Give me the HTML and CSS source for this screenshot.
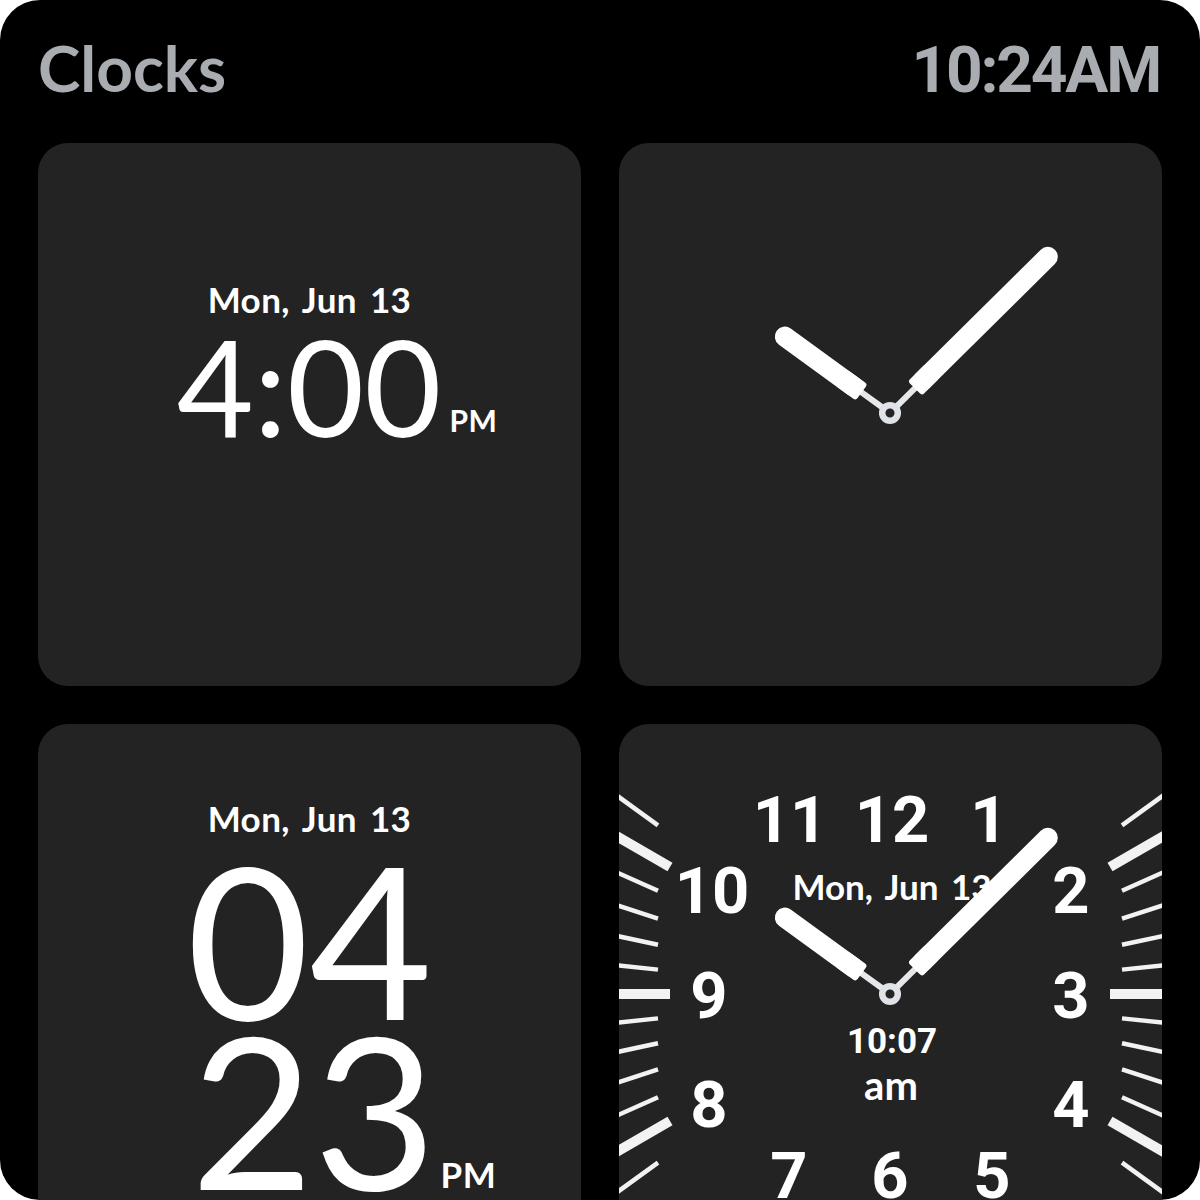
FILE: index.html
```html
<!DOCTYPE html>
<html lang="en">
<head>
<meta charset="utf-8">
<title>Clocks</title>
<link rel="stylesheet" href="styles.css">
</head>
<body>
<div class="screen">
  <header class="topbar">
    <h1 class="title">Clocks</h1>
    <div class="now">10:24AM</div>
  </header>
  <main class="grid">
    <section class="card digital-a">
      <div class="date">Mon, Jun 13</div>
      <div class="time-a">4:00<span class="ampm">PM</span></div>
    </section>

    <section class="card">
      <svg class="face" viewBox="0 0 543 543" width="543" height="543">
        <g transform="translate(271 270)">
          <g transform="rotate(-54)">
            <rect class="hand-link" x="-3" y="-42" width="6" height="34"/>
            <rect class="hand" x="-10" y="-140" width="20" height="105" rx="10"/>
            <rect class="hand" x="-10" y="-60" width="20" height="25" rx="3"/>
          </g>
          <g transform="rotate(45.3)">
            <rect class="hand-link" x="-3" y="-42" width="6" height="34"/>
            <rect class="hand" x="-10" y="-232" width="20" height="197" rx="10"/>
            <rect class="hand" x="-10" y="-60" width="20" height="25" rx="3"/>
          </g>
          <circle class="pivot" cx="0" cy="0" r="7.8"/>
        </g>
      </svg>
    </section>

    <section class="card digital-b">
      <div class="date">Mon, Jun 13</div>
      <div class="time-b time-b-first">04</div>
      <div class="time-b">23<span class="ampm ampm-b">PM</span></div>
    </section>

    <section class="card">
      <svg class="face" viewBox="0 0 543 543" width="543" height="543">
        <g class="ticks">
          <line class="tick" x1="39" y1="245.62" x2="-29" y2="238.47"/>
          <line class="tick" x1="39" y1="294.38" x2="-29" y2="301.53"/>
          <line class="tick" x1="39" y1="220.69" x2="-29" y2="206.23"/>
          <line class="tick" x1="39" y1="319.31" x2="-29" y2="333.77"/>
          <line class="tick" x1="39" y1="194.62" x2="-29" y2="172.52"/>
          <line class="tick" x1="39" y1="345.38" x2="-29" y2="367.48"/>
          <line class="tick" x1="39" y1="166.71" x2="-29" y2="136.43"/>
          <line class="tick" x1="39" y1="373.29" x2="-29" y2="403.57"/>
          <line class="tick-major" x1="51" y1="142.98" x2="-29" y2="96.79"/>
          <line class="tick-major" x1="51" y1="397.02" x2="-29" y2="443.21"/>
          <line class="tick" x1="39" y1="101.44" x2="-29" y2="52.04"/>
          <line class="tick" x1="39" y1="438.56" x2="-29" y2="487.96"/>
          <line class="tick-major" x1="51" y1="270" x2="-29" y2="270"/>

          <line class="tick" x1="503" y1="245.62" x2="571" y2="238.47"/>
          <line class="tick" x1="503" y1="294.38" x2="571" y2="301.53"/>
          <line class="tick" x1="503" y1="220.69" x2="571" y2="206.23"/>
          <line class="tick" x1="503" y1="319.31" x2="571" y2="333.77"/>
          <line class="tick" x1="503" y1="194.62" x2="571" y2="172.52"/>
          <line class="tick" x1="503" y1="345.38" x2="571" y2="367.48"/>
          <line class="tick" x1="503" y1="166.71" x2="571" y2="136.43"/>
          <line class="tick" x1="503" y1="373.29" x2="571" y2="403.57"/>
          <line class="tick-major" x1="491" y1="142.98" x2="571" y2="96.79"/>
          <line class="tick-major" x1="491" y1="397.02" x2="571" y2="443.21"/>
          <line class="tick" x1="503" y1="101.44" x2="571" y2="52.04"/>
          <line class="tick" x1="503" y1="438.56" x2="571" y2="487.96"/>
          <line class="tick-major" x1="491" y1="270" x2="571" y2="270"/>
        </g>
        <g class="numerals">
          <text x="171" y="118">11</text>
          <text x="273" y="118">12</text>
          <text x="370" y="118">1</text>
          <text x="93" y="189">10</text>
          <text x="452" y="189">2</text>
          <text x="90" y="294">9</text>
          <text x="452" y="294">3</text>
          <text x="90" y="403">8</text>
          <text x="452" y="403">4</text>
          <text x="170" y="474">7</text>
          <text x="271" y="474">6</text>
          <text x="373" y="474">5</text>
        </g>
        <text class="face-date" x="273" y="176">Mon, Jun 13</text>
        <text class="face-time" x="273" y="329">10:07</text>
        <text class="face-ampm" x="272" y="376">am</text>
        <g transform="translate(271 270)">
          <g transform="rotate(-54)">
            <rect class="hand-link" x="-3" y="-42" width="6" height="34"/>
            <rect class="hand" x="-10" y="-140" width="20" height="105" rx="10"/>
            <rect class="hand" x="-10" y="-60" width="20" height="25" rx="3"/>
          </g>
          <g transform="rotate(45.3)">
            <rect class="hand-link" x="-3" y="-42" width="6" height="34"/>
            <rect class="hand" x="-10" y="-232" width="20" height="197" rx="10"/>
            <rect class="hand" x="-10" y="-60" width="20" height="25" rx="3"/>
          </g>
          <circle class="pivot" cx="0" cy="0" r="7.8"/>
        </g>
      </svg>
    </section>
  </main>
</div>
</body>
</html>
```

FILE: styles.css
```css
html, body {
  margin: 0;
  padding: 0;
  background: #ffffff;
}

.screen {
  width: 1200px;
  height: 1200px;
  background: #000000;
  border-radius: 40px;
  overflow: hidden;
  box-sizing: border-box;
  padding: 0 38px;
}

.topbar {
  height: 143px;
  box-sizing: border-box;
  padding-top: 36px;
  display: flex;
  justify-content: space-between;
  align-items: baseline;
  color: #a9acb0;
}

.title {
  margin: 0;
  font-family: Lato, "Noto Sans", sans-serif;
  font-weight: 700;
  font-size: 64px;
  line-height: 1;
}

.now {
  font-family: Roboto, "Liberation Sans", sans-serif;
  font-weight: 700;
  font-size: 64px;
  line-height: 1;
  letter-spacing: -2.2px;
  margin-right: 2px;
}

.grid {
  display: grid;
  grid-template-columns: 543px 543px;
  grid-auto-rows: 543px;
  gap: 38px;
}

.card {
  background: #232323;
  border-radius: 30px;
  overflow: hidden;
  color: #ffffff;
  font-family: Lato, "Noto Sans", sans-serif;
}

.digital-a,
.digital-b {
  display: flex;
  flex-direction: column;
  align-items: center;
  box-sizing: border-box;
}

.digital-a {
  padding-top: 139px;
}

.digital-b {
  padding-top: 77px;
}

.date {
  font-weight: 700;
  font-size: 35px;
  line-height: 35px;
  letter-spacing: 0.4px;
  word-spacing: 4px;
}

.time-a {
  margin-top: 6px;
  font-weight: 400;
  font-size: 133px;
  line-height: 126px;
  white-space: nowrap;
}

.ampm {
  font-weight: 700;
  font-size: 30px;
  letter-spacing: 0.5px;
  margin-left: 8px;
  margin-right: -55px;
  vertical-align: 5px;
}

.time-b {
  font-weight: 400;
  font-size: 212px;
  line-height: 170px;
  white-space: nowrap;
}

.time-b-first {
  margin-top: 17px;
}

.ampm-b {
  font-size: 35px;
  margin-left: 4px;
  margin-right: -68px;
  vertical-align: 2px;
}

.face {
  display: block;
}

.hand {
  fill: #ffffff;
}

.hand-link {
  fill: #e6e8eb;
}

.pivot {
  fill: #232323;
  stroke: #dfe2e7;
  stroke-width: 6.5;
}

.tick {
  stroke: #f2f2f2;
  stroke-width: 4.5;
}

.tick-major {
  stroke: #f2f2f2;
  stroke-width: 10;
}

.numerals text {
  font-family: Roboto, "Liberation Sans", sans-serif;
  font-weight: 700;
  font-size: 65px;
  fill: #ffffff;
  text-anchor: middle;
}

.face-date {
  font-family: Lato, "Noto Sans", sans-serif;
  font-weight: 700;
  font-size: 35px;
  fill: #ffffff;
  text-anchor: middle;
  word-spacing: 4px;
}

.face-time {
  font-family: Roboto, "Liberation Sans", sans-serif;
  font-weight: 700;
  font-size: 35px;
  fill: #ffffff;
  text-anchor: middle;
}

.face-ampm {
  font-family: Lato, "Noto Sans", sans-serif;
  font-weight: 700;
  font-size: 40px;
  fill: #ffffff;
  text-anchor: middle;
}
```
